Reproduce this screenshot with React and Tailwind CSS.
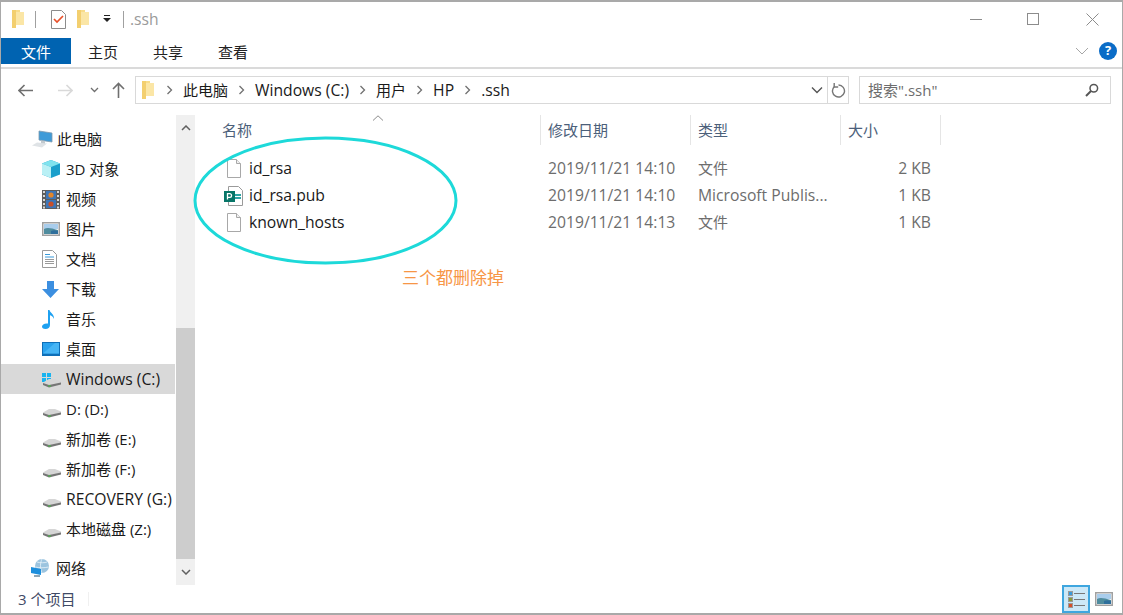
import React from "react";

const FolderIcon = ({ className = "" }) => (
  <svg width="14" height="20" viewBox="0 0 14 20" className={className}>
    <path d="M1 1h8v2h4v13H5v3H1z" fill="#f8dc8a" />
    <path d="M1 1h4v18H1z" fill="#f3cf6f" />
    <path d="M5 3h8v13H5z" fill="#fbe6a6" />
  </svg>
);

const FileIcon = () => (
  <svg width="16" height="19" viewBox="0 0 16 19">
    <path d="M1.500.500h9l4 4v14h-13z" fill="#fff" stroke="#a8a8a8" />
    <path d="M10.500.500v4h4" fill="#f0f0f0" stroke="#a8a8a8" />
  </svg>
);

const PublisherIcon = () => (
  <svg width="19" height="20" viewBox="0 0 19 20">
    <path d="M4.500.500h10l4 4v15h-14z" fill="#fff" stroke="#9a9a9a" />
    <path d="M11 8h6v2h-6zM11 11h6v2h-6z" fill="#2fa5a5" />
    <rect x="0" y="5" width="11" height="11" fill="#077568" />
    <path d="M3.500 13.500V7.700h2.200a1.800 1.800 0 0 1 0 3.700H3.500" fill="none" stroke="#fff" strokeWidth="1.300" />
  </svg>
);

const DriveIcon = ({ windows }) => (
  <svg width="19" height="18" viewBox="0 0 19 18">
    {windows && (
      <g fill="#18b4f0">
        <rect x="0" y="3" width="4" height="4" />
        <rect x="5" y="3" width="4" height="4" />
        <rect x="0" y="8" width="4" height="4" />
        <rect x="5" y="8" width="4" height="4" />
      </g>
    )}
    <path d="M1 12.500 7 9h6l6 2.500V13L7 15.500 1 13.500z" fill="#d6d6d6" />
    <path d="M1 13 7 15l12-2.500v2L7 17.500 1 15z" fill="#767676" />
    <rect x="6" y="15.500" width="3" height="1" fill="#43c043" />
  </svg>
);

const PcIcon = () => (
  <svg width="21" height="18" viewBox="0 0 21 18">
    <path d="M7 1l13 2v9L7 10z" fill="#3f9bd8" stroke="#7f99ad" strokeWidth=".8" />
    <path d="M0 15.500l5-3 10 1-5 4z" fill="#dfe3e6" />
    <path d="M9 10.500l4 .6v2.300l-4-.4z" fill="#c2c9ce" />
  </svg>
);

const CubeIcon = () => (
  <svg width="18" height="18" viewBox="0 0 18 18">
    <path d="M9 0l9 3.500v11L9 18l-9-3.500v-11z" fill="#1a9fcb" />
    <path d="M0 3.500L9 0l9 3.500L9 7z" fill="#7fe3ee" />
    <path d="M0 3.500L9 7v11L0 14.500z" fill="#b9f0f5" />
  </svg>
);

const VideoIcon = () => (
  <svg width="18" height="19" viewBox="0 0 18 19">
    <rect width="18" height="19" fill="#5d5d5d" />
    <path d="M1 1h2v2H1zM1 5h2v2H1zM1 9h2v2H1zM1 13h2v2H1zM1 16.500h2v2H1zM15 1h2v2h-2zM15 5h2v2h-2zM15 9h2v2h-2zM15 13h2v2h-2zM15 16.500h2v2h-2z" fill="#d8d8d8" />
    <rect x="4" y="1" width="10" height="8" fill="#3d76b8" />
    <rect x="4" y="10" width="10" height="8" fill="#3d76b8" />
    <circle cx="9" cy="5" r="2.600" fill="#e3862b" />
    <circle cx="9" cy="14" r="2.600" fill="#c94f2a" />
  </svg>
);

const PictureIcon = () => (
  <svg width="18" height="14" viewBox="0 0 18 14">
    <rect x=".75" y=".75" width="16.500" height="12.500" fill="#fff" stroke="#a0a0a0" strokeWidth="1.500" />
    <rect x="2" y="2" width="14" height="5" fill="#a9cdec" />
    <path d="M2 7c3-2 7-1 14 1v4H2z" fill="#4f8c9e" />
    <path d="M9 9c2-1 5-1 7 0v3H9z" fill="#2f6f9c" />
  </svg>
);

const DocIcon = () => (
  <svg width="15" height="18" viewBox="0 0 15 18">
    <path d="M.5.500h10l4 4v13H.5z" fill="#fff" stroke="#9a9a9a" />
    <path d="M3 4h5v1H3zM3 6.500h9v1H3z" fill="#3a9ad9" />
    <path d="M3 9h9v1H3zM3 11h9v1H3zM3 13h9v1H3z" fill="#9a9a9a" />
  </svg>
);

const DownloadIcon = () => (
  <svg width="17" height="17" viewBox="0 0 17 17">
    <path d="M5 0h7v8h5l-8.500 9L0 8h5z" fill="#3c8fe0" />
  </svg>
);

const MusicIcon = () => (
  <svg width="13" height="19" viewBox="0 0 13 19">
    <path d="M6 0h1.500c.5 3 5 4 4.500 9-1-2.500-3-3.500-4-3.700V15c0 2.500-2 4-4.500 4C1 19 0 18 0 16.500 0 14.500 2.500 13 6 13.500z" fill="#1ea1f1" />
  </svg>
);

const DesktopIcon = () => (
  <svg width="18" height="14" viewBox="0 0 18 14">
    <rect width="18" height="14" fill="#0f6fb8" />
    <path d="M1 1h16v10.500H1z" fill="#2ba3ee" />
    <path d="M1 11.500 13 1h4v10.500z" fill="#47b5f5" />
  </svg>
);

const NetworkIcon = () => (
  <svg width="19" height="19" viewBox="0 0 19 19">
    <circle cx="11" cy="7" r="7" fill="#9cc4df" />
    <path d="M6 3c3 1 8 1 10 0M4.500 8c3 1 9 1 13 0M11 0c-2 4-2 9 0 14" fill="none" stroke="#eaf4fa" strokeWidth=".8" />
    <path d="M0 8l10 2v6L0 14z" fill="#1d8fdd" />
    <path d="M3 16h6v2H3z" fill="#8fa6b5" />
  </svg>
);

const Chevron = () => (
  <svg width="7" height="10" viewBox="0 0 7 10" className="mx-[2px]">
    <path d="M1.500 1l4 4-4 4" fill="none" stroke="#707070" strokeWidth="1.300" />
  </svg>
);

const navItems = [
  { label: "此电脑", icon: <PcIcon />, indent: "pl-[31px]", gap: "w-[25px]" },
  { label: "3D 对象", icon: <CubeIcon /> },
  { label: "视频", icon: <VideoIcon /> },
  { label: "图片", icon: <PictureIcon /> },
  { label: "文档", icon: <DocIcon /> },
  { label: "下载", icon: <DownloadIcon /> },
  { label: "音乐", icon: <MusicIcon /> },
  { label: "桌面", icon: <DesktopIcon /> },
  { label: "Windows (C:)", icon: <DriveIcon windows />, selected: true, latin: true },
  { label: "D: (D:)", icon: <DriveIcon /> },
  { label: "新加卷 (E:)", icon: <DriveIcon /> },
  { label: "新加卷 (F:)", icon: <DriveIcon /> },
  { label: "RECOVERY (G:)", icon: <DriveIcon />, latin: true },
  { label: "本地磁盘 (Z:)", icon: <DriveIcon /> },
];

const files = [
  { name: "id_rsa", date: "2019/11/21 14:10", type: "文件", size: "2 KB", icon: <FileIcon /> },
  { name: "id_rsa.pub", date: "2019/11/21 14:10", type: "Microsoft Publis...", size: "1 KB", icon: <PublisherIcon />, latinType: true },
  { name: "known_hosts", date: "2019/11/21 14:13", type: "文件", size: "1 KB", icon: <FileIcon /> },
];

const NavRow = ({ item }) => (
  <div
    className={`h-[30px] flex items-center ${item.indent || "pl-[41px]"} ${
      item.selected ? "bg-[#d9d9d9]" : ""
    }`}
  >
    <span className={`${item.gap || "w-[24px]"} flex justify-start shrink-0`}>
      {item.icon}
    </span>
    <span className={`whitespace-nowrap ${item.latin ? "text-[15.7px] pt-[2px]" : ""}`}>{item.label}</span>
  </div>
);

const App = () => {
  return (
    <div className="relative w-[1123px] h-[615px] overflow-hidden bg-white border-t-2 border-b-2 border-l border-r border-[#a9a9a9] text-[15px] text-[#1a1a1a] font-['Open_Sans','Noto_Sans_CJK_SC',sans-serif] flex flex-col">
      {/* title bar */}
      <div className="h-[36px] shrink-0 flex items-center pb-[2px] pl-[10px] text-[#9a9a9a]">
        <FolderIcon />
        <span className="ml-[10px] w-px h-[17px] bg-[#a0a0a0]" />
        <svg width="15" height="19" viewBox="0 0 15 19" className="ml-[15px]">
          <path d="M.5.500h10l4 4v14H.5z" fill="#fff" stroke="#8c8c8c" />
          <path d="M3 9l3 3 6-6" fill="none" stroke="#e8502a" strokeWidth="1.700" />
        </svg>
        <FolderIcon className="ml-[10px]" />
        <svg width="10" height="10" viewBox="0 0 10 10" className="ml-[12px]">
          <path d="M2 1h6v1H2zM1 4h8L5 8z" fill="#222" />
        </svg>
        <span className="ml-[11px] w-px h-[17px] bg-[#a0a0a0]" />
        <span className="ml-[6px] mt-[2px] text-[15.7px]">.ssh</span>
        <div className="ml-auto flex items-center">
          <svg width="14" height="14" viewBox="0 0 14 14" className="mr-[44px]">
            <path d="M1 7.500h12" stroke="#8c8c8c" />
          </svg>
          <svg width="13" height="13" viewBox="0 0 13 13" className="mr-[46px]">
            <rect x=".5" y=".5" width="11" height="11" fill="none" stroke="#8c8c8c" />
          </svg>
          <svg width="13" height="13" viewBox="0 0 13 13" className="mr-[23px]">
            <path d="M.5.500l12 12M12.500.500l-12 12" stroke="#8c8c8c" />
          </svg>
        </div>
      </div>

      {/* ribbon tabs */}
      <div className="h-[31px] shrink-0 flex border-b-2 border-[#dadada] pb-[3px]">
        <div className="w-[70px] bg-[#0063b1] text-white flex items-center justify-center pt-[2px]">文件</div>
        <div className="flex items-center gap-[35px] ml-[17px] pt-[2px] text-[#222]">
          <span>主页</span>
          <span>共享</span>
          <span>查看</span>
        </div>
        <div className="ml-auto flex items-center pr-[5px]">
          <svg width="14" height="8" viewBox="0 0 14 8" className="mr-[10px]">
            <path d="M1 1l6 6 6-6" fill="none" stroke="#a6a6a6" />
          </svg>
          <span className="w-[18px] h-[18px] rounded-full bg-[#0a6cc7] text-white text-[13px] font-bold flex items-center justify-center">?</span>
        </div>
      </div>

      {/* address row */}
      <div className="h-[42px] shrink-0 flex items-center">
        <div className="w-[134px] shrink-0 flex items-center text-[#6f6f6f]">
          <svg width="16" height="13" viewBox="0 0 16 13" className="ml-[17px]">
            <path d="M1 6.500h14M6.500 1 1 6.500 6.500 12" fill="none" stroke="#6f6f6f" strokeWidth="1.600" />
          </svg>
          <svg width="16" height="13" viewBox="0 0 16 13" className="ml-[23px]">
            <path d="M1 6.500h14M9.500 1 15 6.500 9.500 12" fill="none" stroke="#d9d9d9" strokeWidth="1.600" />
          </svg>
          <svg width="9" height="6" viewBox="0 0 9 6" className="ml-[17px]">
            <path d="M1 1l3.500 3.500L8 1" fill="none" stroke="#6f6f6f" strokeWidth="1.300" />
          </svg>
          <svg width="13" height="16" viewBox="0 0 13 16" className="ml-[13px]">
            <path d="M6.500 16V1.500M1 7l5.500-5.500L12 7" fill="none" stroke="#6f6f6f" strokeWidth="1.600" />
          </svg>
        </div>
        <div className="w-[714px] h-[28px] shrink-0 border border-[#d9d9d9] flex items-center text-[#1a1a1a]">
          <FolderIcon className="ml-[5px]" />
          <div className="flex-1 flex items-center ml-[9px] gap-[8px]">
            <Chevron />
            <span>此电脑</span>
            <Chevron />
            <span className="text-[15.7px] pt-[2px]">Windows (C:)</span>
            <Chevron />
            <span>用户</span>
            <Chevron />
            <span className="text-[15.7px] pt-[2px]">HP</span>
            <Chevron />
            <span className="text-[15.7px] pt-[2px]">.ssh</span>
          </div>
          <span className="w-[21px] flex justify-center">
            <svg width="12" height="8" viewBox="0 0 12 8">
              <path d="M1 1.500l5 5 5-5" fill="none" stroke="#555" strokeWidth="1.400" />
            </svg>
          </span>
          <span className="w-[21px] h-full border-l border-[#d9d9d9] flex items-center justify-center">
            <svg width="15" height="16" viewBox="0 0 15 16">
              <path d="M3.200 1v4h4" fill="none" stroke="#777" strokeWidth="1.400" />
              <path d="M7.500 3A6 6 0 1 1 3.200 4.800" fill="none" stroke="#777" strokeWidth="1.400" />
            </svg>
          </span>
        </div>
        <div className="ml-[10px] w-[252px] h-[28px] border border-[#d9d9d9] flex items-center pl-[8px] pr-[11px] text-[#6d6d6d]">
          <span>搜索".ssh"</span>
          <svg width="14" height="14" viewBox="0 0 14 14" className="ml-auto">
            <circle cx="8.800" cy="5.200" r="3.800" fill="none" stroke="#555" strokeWidth="1.500" />
            <path d="M6 8l-5 5" stroke="#555" strokeWidth="2" />
          </svg>
        </div>
      </div>

      {/* body */}
      <div className="flex-1 min-h-0 flex pt-[4px]">
        <div className="w-[174px] shrink-0 pt-[9px]">
          {navItems.map((item) => (
            <NavRow key={item.label} item={item} />
          ))}
          <div className="mt-[9px]">
            <NavRow item={{ label: "网络", icon: <NetworkIcon />, indent: "pl-[30px]", gap: "w-[25px]" }} />
          </div>
        </div>

        {/* sidebar scrollbar */}
        <div className="w-[19px] ml-px shrink-0 bg-[#f0f0f0] flex flex-col">
          <div className="h-[26px] flex items-center justify-center">
            <svg width="10" height="6" viewBox="0 0 10 6">
              <path d="M1 5l4-4 4 4" fill="none" stroke="#606060" strokeWidth="1.500" />
            </svg>
          </div>
          <div className="h-[187px]" />
          <div className="h-[232px] bg-[#cdcdcd]" />
          <div className="h-[26px] flex items-center justify-center">
            <svg width="10" height="6" viewBox="0 0 10 6">
              <path d="M1 1l4 4 4-4" fill="none" stroke="#606060" strokeWidth="1.500" />
            </svg>
          </div>
        </div>

        {/* file list */}
        <div className="flex-1 min-w-0 pl-[19px]">
          <div className="relative h-[32px] pb-[2px] flex text-[#4c607a]">
            <span className="w-[326px] pl-[8px] flex items-center">名称</span>
            <span className="w-[150px] border-l border-[#e5e5e5] pl-[7px] flex items-center">修改日期</span>
            <span className="w-[150px] border-l border-[#e5e5e5] pl-[7px] flex items-center">类型</span>
            <span className="w-[101px] border-x border-[#e5e5e5] pl-[7px] flex items-center">大小</span>
            <svg width="12" height="6" viewBox="0 0 12 6" className="absolute left-[158px] top-0">
              <path d="M1 5.500 6 .8l5 4.700" fill="none" stroke="#8c8c8c" />
            </svg>
          </div>
          <div className="pt-[8px]">
            {files.map((file) => (
              <div key={file.name} className="h-[27px] flex items-center text-[15.7px] text-[#6d6d6d]">
                <span className="w-[35px] flex justify-center shrink-0 pl-[4px]">{file.icon}</span>
                <span className="w-[299px] text-[#1a1a1a]">{file.name}</span>
                <span className="w-[150px] shrink-0">{file.date}</span>
                <span className={`w-[150px] whitespace-nowrap ${file.latinType ? "" : "text-[15px]"}`}>{file.type}</span>
                <span className="w-[83px] text-right">{file.size}</span>
              </div>
            ))}
          </div>
        </div>
      </div>

      {/* status bar */}
      <div className="h-[28px] shrink-0 flex items-center pl-[17px] text-[#3f4a66]">
        <span>3 个项目</span>
        <span className="ml-[13px] w-px h-[14px] bg-[#f0f0f0]" />
        <div className="ml-auto flex items-center pr-[9px]">
          <span className="w-[28px] h-[28px] bg-[#cce8f7] border-2 border-[#3ea6df] flex flex-col items-center justify-center gap-[1px]">
            {["#3a9ad9", "#8a9a3a", "#d8502a"].map((color) => (
              <span key={color} className="flex items-center gap-[1px]">
                <span className="w-[5px] h-[5px] border" style={{ backgroundColor: color, borderColor: "#999" }} />
                <span className="w-[11px] h-[1px] bg-[#777]" />
              </span>
            ))}
          </span>
          <span className="ml-[5px] flex"><PictureIcon /></span>
        </div>
      </div>

      {/* annotation drawn over the screenshot */}
      <svg width="270" height="134" viewBox="0 0 270 134" className="absolute left-[190px] top-[132px] pointer-events-none">
        <ellipse cx="134.500" cy="66.500" rx="130.500" ry="62.500" fill="none" stroke="#1dd9d9" strokeWidth="3" />
      </svg>
      <span className="absolute left-[401px] top-[263px] text-[17px] text-[#f79646]">三个都删除掉</span>
    </div>
  );
};

export default App;
